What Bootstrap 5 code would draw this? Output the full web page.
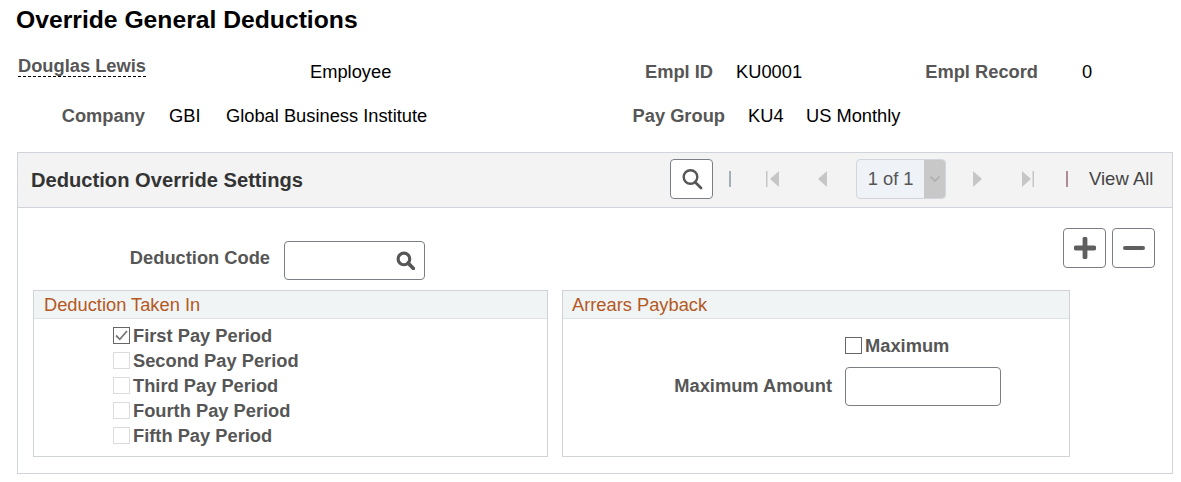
<!DOCTYPE html>
<html lang="en">
<head>
<meta charset="utf-8">
<title>Override General Deductions</title>
<link href="https://cdn.jsdelivr.net/npm/bootstrap@5.3.0/dist/css/bootstrap.min.css" rel="stylesheet">
<style>
html,body{background:#fff;overflow:hidden}
body{font-family:"Liberation Sans",Arial,sans-serif;font-size:18.3px;line-height:24px;color:#000;width:1181px;height:482px}
.page-title{font-size:24.7px;font-weight:700;line-height:28px;margin:0;padding:6px 0 0 16px;color:#000}
.lbl{font-weight:700;font-size:18.3px;color:#565656;text-align:right;flex:none;white-space:nowrap}
.val{flex:none;color:#000;white-space:nowrap}
.info-one{height:50px;margin-top:20px;padding:6px 0 0 18px}
.info-two{height:48px;padding-left:18px}
.name-link{font-weight:700;font-size:18.3px;color:#565656;line-height:20px;border-bottom:1px dashed #000;margin-top:-4px;height:21px;flex:none}
.c-name{width:292px;flex:none}
.c-emp{width:335px}
.c-id{width:68px}
.c-kid{width:189px;margin-left:23px}
.c-rec{width:113px}
.c-zero{margin-left:44px}
.c-comp{width:127px}
.c-gbi{width:57px;margin-left:24px}
.c-glob{width:392px}
.c-pg{width:107px}
.c-ku{width:58px;margin-left:23px}
.panel-box{margin:0 8px 0 17px;width:1156px;height:322px;border:1px solid #d0d3d9}
.panel-head{height:55px;background:#f3f3f3;border-bottom:1px solid #d0d3d9;padding-left:13px}
.panel-name{font-size:20.15px;font-weight:700;color:#333;width:639px;flex:none}
.tools{height:40px;margin-top:-2px}
.tool-btn{width:43px;height:40px;border:1px solid #7b7f85;border-radius:4px;background:#fff;padding:0;display:flex;align-items:center;justify-content:center;flex:none}
.sep{width:2px;height:16px;background:#a3aeb9;flex:none;margin-left:16px}
.sep-b{background:#b08a96;margin-left:32px}
.ic-first{margin-left:35px}
.ic-prev{margin-left:39px}
.pager{width:90px;height:40px;border:1px solid #d2d6dc;border-radius:4px;background:#eff2f6;color:#565656;overflow:hidden;flex:none;margin-left:29px}
.pager-text{width:68px;text-align:center}
.pager-drop{width:21px;height:38px;background:#c8c8c8}
.ic-next{margin-left:27px}
.ic-last{margin-left:40px}
.view-all{color:#444;flex:none;margin-left:21px;font-size:18.5px}
.field-input{border:1px solid #7b7f85;border-radius:4px;background:#fff;flex:none}
.top-zone{padding:20px 17px 0 0;height:82px}
.code-lbl{width:252px;padding-top:13px;line-height:34px}
.code-box{width:141px;height:39px;margin-left:14px;margin-top:13px;padding-right:9px}
.add-rem{margin-left:auto;gap:6px}
.group-wrap{padding-left:15px;gap:14px}
.group-one{width:515px;height:167px}
.group-two{width:508px;height:167px}
.group-b{border:1px solid #cfd2d6}
.group-h{height:28px;background:#f1f4f5;border-bottom:1px solid #dfe3e6;color:#b3591f;padding-left:10px;line-height:28px;font-size:18.3px}
.group-two .group-h{padding-left:9px}
.chk-list{padding:4px 0 0 79px}
.chk-row{height:25px;line-height:25px;font-weight:700;font-size:18.3px;color:#565656}
.box-input{appearance:none;-webkit-appearance:none;width:17px;height:17px;margin:0 3px 0 0;border:1px solid #dcdcdc;border-radius:0;background:#fff center/15px 15px no-repeat;flex:none;display:block}
.box-on{border-color:#666;background-image:url("data:image/svg+xml,%3Csvg xmlns='http://www.w3.org/2000/svg' viewBox='0 0 15 15'%3E%3Cpath d='M2 7.500l3.800 3.800L13 3' fill='none' stroke='%23777' stroke-width='1.800'/%3E%3C/svg%3E")}
.box-plain{border-color:#666}
.max-row{padding:15px 0 0 282px;height:38px;line-height:26px;font-weight:700;font-size:18.3px;color:#565656}
.amt-row{margin-top:10px}
.amt-lbl{width:269px;margin-top:-2px}
.amt-box{width:156px;height:39px;margin-left:13px}
</style>
</head>
<body>
<h1 class="page-title">Override General Deductions</h1>

<div class="d-flex align-items-start info-one">
  <div class="c-name d-flex"><span class="name-link">Douglas Lewis</span></div>
  <div class="val c-emp">Employee</div>
  <div class="lbl c-id">Empl ID</div>
  <div class="val c-kid">KU0001</div>
  <div class="lbl c-rec">Empl Record</div>
  <div class="val c-zero">0</div>
</div>
<div class="d-flex align-items-start info-two">
  <div class="lbl c-comp">Company</div>
  <div class="val c-gbi">GBI</div>
  <div class="val c-glob">Global Business Institute</div>
  <div class="lbl c-pg">Pay Group</div>
  <div class="val c-ku">KU4</div>
  <div class="val">US Monthly</div>
</div>

<div class="panel-box">
  <div class="panel-head d-flex align-items-center">
    <div class="panel-name">Deduction Override Settings</div>
    <div class="tools d-flex align-items-center">
      <button type="button" class="tool-btn" aria-label="Search">
        <svg width="22" height="22" viewBox="0 0 22 22"><circle cx="9.500" cy="9" r="6.800" fill="none" stroke="#565656" stroke-width="2.400"/><path d="M14 14l6 6" stroke="#565656" stroke-width="2.800" stroke-linecap="round"/></svg>
      </button>
      <span class="sep"></span>
      <svg class="ic-first" width="13" height="16" viewBox="0 0 13 16"><rect x="0" y="0" width="1.500" height="16" fill="#c6c6c6"/><path d="M13 0v16L4 8z" fill="#c6c6c6"/></svg>
      <svg class="ic-prev" width="9" height="16" viewBox="0 0 9 16"><path d="M9 0v16L0 8z" fill="#c6c6c6"/></svg>
      <div class="pager d-flex align-items-center">
        <div class="pager-text">1 of 1</div>
        <div class="pager-drop d-flex align-items-center justify-content-center">
          <svg width="12" height="8" viewBox="0 0 12 8"><path d="M1.500 1.500L6 6l4.500-4.500" fill="none" stroke="#a9a9a9" stroke-width="1.300"/></svg>
        </div>
      </div>
      <svg class="ic-next" width="9" height="16" viewBox="0 0 9 16"><path d="M0 0v16L9 8z" fill="#c6c6c6"/></svg>
      <svg class="ic-last" width="12" height="16" viewBox="0 0 12 16"><path d="M0 0v16L9 8z" fill="#c6c6c6"/><rect x="10.500" y="0" width="1.500" height="16" fill="#c6c6c6"/></svg>
      <span class="sep sep-b"></span>
      <a class="view-all text-decoration-none" href="#">View All</a>
    </div>
  </div>

  <div class="top-zone d-flex align-items-start">
    <div class="lbl code-lbl">Deduction Code</div>
    <div class="field-input code-box d-flex align-items-center justify-content-end">
      <svg width="19" height="19" viewBox="0 0 18 18"><circle cx="7.500" cy="7.500" r="5.500" fill="none" stroke="#565656" stroke-width="3"/><path d="M11.500 11.500l5 5" stroke="#565656" stroke-width="3.400" stroke-linecap="round"/></svg>
    </div>
    <div class="add-rem d-flex">
      <button type="button" class="tool-btn" aria-label="Add">
        <svg width="22" height="22" viewBox="0 0 22 22"><path d="M11 2v18M2 11h18" stroke="#5f5f5f" stroke-width="4.800" stroke-linecap="round"/></svg>
      </button>
      <button type="button" class="tool-btn" aria-label="Remove">
        <svg width="22" height="22" viewBox="0 0 22 22"><path d="M2 11h18" stroke="#5f5f5f" stroke-width="4" stroke-linecap="round"/></svg>
      </button>
    </div>
  </div>

  <div class="d-flex group-wrap">
    <div class="group-b group-one">
      <div class="group-h">Deduction Taken In</div>
      <div class="chk-list">
        <label class="chk-row d-flex align-items-center"><input type="checkbox" class="box-input box-on" checked disabled>First Pay Period</label>
        <label class="chk-row d-flex align-items-center"><input type="checkbox" class="box-input" disabled>Second Pay Period</label>
        <label class="chk-row d-flex align-items-center"><input type="checkbox" class="box-input" disabled>Third Pay Period</label>
        <label class="chk-row d-flex align-items-center"><input type="checkbox" class="box-input" disabled>Fourth Pay Period</label>
        <label class="chk-row d-flex align-items-center"><input type="checkbox" class="box-input" disabled>Fifth Pay Period</label>
      </div>
    </div>
    <div class="group-b group-two">
      <div class="group-h">Arrears Payback</div>
      <label class="max-row d-flex align-items-center"><input type="checkbox" class="box-input box-plain">Maximum</label>
      <div class="amt-row d-flex align-items-center">
        <div class="lbl amt-lbl">Maximum Amount</div>
        <div class="field-input amt-box"></div>
      </div>
    </div>
  </div>
</div>
<script src="https://cdn.jsdelivr.net/npm/bootstrap@5.3.0/dist/js/bootstrap.bundle.min.js"></script>
</body>
</html>
